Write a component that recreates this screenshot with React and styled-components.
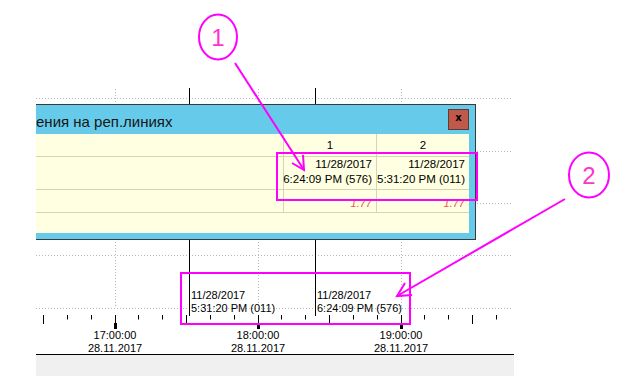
import React from 'react';
import styled, { createGlobalStyle } from 'styled-components';

const GlobalStyle = createGlobalStyle`
    html, body {
        margin: 0;
        padding: 0;
        background: #ffffff;
    }
    body {
        font-family: 'Liberation Sans', Arial, sans-serif;
    }
`;

const CHART_LEFT = 36;
const CHART_WIDTH = 478;
const PX_PER_MIN = 143 / 60;
const HOUR17_X = 114.5 - CHART_LEFT;

// minutes since 17:00 -> x inside the chart
const timeX = (min) => HOUR17_X + min * PX_PER_MIN;

const Page = styled.div`
    position: relative;
    width: 633px;
    height: 385px;
    overflow: hidden;
    box-sizing: border-box;
    padding: 88px 0 0 ${CHART_LEFT}px;
`;

const Chart = styled.div`
    display: flex;
    flex-direction: column;
    width: ${CHART_WIDTH}px;
`;

const Plot = styled.div`
    position: relative;
    height: 241px;

    svg {
        display: block;
    }
`;

const MarkerLabel = styled.div`
    position: absolute;
    top: 201px;
    font-size: 11px;
    line-height: 13px;
    color: #000;
    white-space: nowrap;
`;

const AxisLabels = styled.div`
    position: relative;
    height: 25px;
`;

const AxisLabel = styled.div`
    position: absolute;
    top: 0;
    transform: translateX(-50%);
    font-size: 11px;
    line-height: 13px;
    color: #000;
    text-align: center;
    white-space: nowrap;
`;

const StatusBar = styled.div`
    height: 21px;
    border-top: 1px solid #000;
    background: #f0f0f0;
`;

const Dialog = styled.div`
    position: absolute;
    left: ${CHART_LEFT}px;
    top: 104px;
    width: 440px;
    height: 136px;
    box-sizing: border-box;
    display: flex;
    flex-direction: column;
    background: #66cbea;
    border: 1px solid #3a3a3a;
    border-left: none;
    padding: 0 6px 6px 0;
`;

const TitleBar = styled.div`
    display: flex;
    align-items: center;
    justify-content: space-between;
    height: 29px;
    flex-shrink: 0;
`;

const Title = styled.div`
    font-size: 15px;
    color: #161616;
    padding-top: 3px;
    white-space: nowrap;
`;

const CloseButton = styled.div`
    width: 19px;
    height: 17px;
    margin-top: -1px;
    padding-bottom: 2px;
    display: flex;
    align-items: center;
    justify-content: center;
    background: #c1594b;
    border: 1px solid #5e3a32;
    font-family: 'DejaVu Sans', sans-serif;
    font-weight: bold;
    font-size: 10px;
    line-height: 1;
    color: #000;
`;

const Content = styled.div`
    flex: 1;
    background: #ffffe1;
`;

const Table = styled.div`
    display: grid;
    grid-template-columns: 247px 93px 93px;
    grid-template-rows: 23px 33px 23px;
`;

const Cell = styled.div`
    box-sizing: border-box;
    border-bottom: 1px solid #d6d3b6;
    border-left: ${(p) => (p.$first ? 'none' : '1px solid #d6d3b6')};
    display: flex;
    flex-direction: column;
    justify-content: ${(p) => p.$justify || 'center'};
    align-items: ${(p) => p.$align || 'flex-end'};
    padding-right: ${(p) => (p.$align === 'center' ? '0' : '4px')};
    font-size: 11.5px;
    line-height: 15px;
    color: #000;
    white-space: nowrap;
`;

const Value = styled.span`
    font-size: 11px;
    font-style: italic;
    color: #ec5656;
    padding-top: 4px;
`;

const Annotations = styled.svg`
    position: absolute;
    left: 0;
    top: 0;
    pointer-events: none;
`;

const markers = [
    { min: 31 + 20 / 60, date: '11/28/2017', time: '5:31:20 PM (011)' },
    { min: 84 + 9 / 60, date: '11/28/2017', time: '6:24:09 PM (576)' },
];

const hours = [
    { min: 0, time: '17:00:00' },
    { min: 60, time: '18:00:00' },
    { min: 120, time: '19:00:00' },
];

const gridRows = [10, 63, 115, 167, 220];

const ChartGrid = () => {
    const ticks = [];
    for (let m = -30; m <= 160; m += 10) ticks.push(m);

    return (
        <svg width={CHART_WIDTH} height={241}>
            {gridRows.map((y) => (
                <line key={y} x1={0} x2={476} y1={y + 0.5} y2={y + 0.5}
                    stroke="#b8b8b8" strokeDasharray="1 2" />
            ))}
            {hours.map((h) => {
                const x = Math.round(timeX(h.min)) + 0.5;
                return (
                    <line key={h.time} x1={x} x2={x} y1={1} y2={220}
                        stroke="#b8b8b8" strokeDasharray="1 2" />
                );
            })}
            {markers.map((m) => {
                const x = Math.round(timeX(m.min)) + 0.5;
                return <line key={m.time} x1={x} x2={x} y1={0} y2={228} stroke="#000" />;
            })}
            {ticks.map((m) => {
                const x = Math.round(timeX(m)) + 0.5;
                const isHour = m % 60 === 0;
                const isHalf = m % 30 === 0;
                return (
                    <g key={m}>
                        <line x1={x} x2={x} y1={227} y2={isHalf ? 236 : 231.5} stroke="#000" />
                        {isHour && <rect x={x - 1.5} y={235} width={3} height={6} fill="#000" />}
                    </g>
                );
            })}
        </svg>
    );
};

const App = () => {
    return (
        <>
            <GlobalStyle />
            <Page>
                <Chart>
                    <Plot>
                        <ChartGrid />
                        {markers.map((m) => (
                            <MarkerLabel key={m.time} style={{ left: Math.round(timeX(m.min)) + 2 }}>
                                <div>{m.date}</div>
                                <div>{m.time}</div>
                            </MarkerLabel>
                        ))}
                    </Plot>
                    <AxisLabels>
                        {hours.map((h) => (
                            <AxisLabel key={h.time} style={{ left: timeX(h.min) + 0.5 }}>
                                <div>{h.time}</div>
                                <div>28.11.2017</div>
                            </AxisLabel>
                        ))}
                    </AxisLabels>
                    <StatusBar />
                </Chart>

                <Dialog>
                    <TitleBar>
                        <Title>ения на реп.линиях</Title>
                        <CloseButton>x</CloseButton>
                    </TitleBar>
                    <Content>
                        <Table>
                            <Cell $first />
                            <Cell $align="center">1</Cell>
                            <Cell $align="center">2</Cell>

                            <Cell $first />
                            <Cell $justify="flex-start">
                                <div>11/28/2017</div>
                                <div>6:24:09 PM (576)</div>
                            </Cell>
                            <Cell $justify="flex-start">
                                <div>11/28/2017</div>
                                <div>5:31:20 PM (011)</div>
                            </Cell>

                            <Cell $first />
                            <Cell><Value>1.77</Value></Cell>
                            <Cell><Value>1.77</Value></Cell>
                        </Table>
                    </Content>
                </Dialog>

                <Annotations width={633} height={385}>
                    <g fill="none" stroke="#ff00ff" strokeWidth={2}>
                        <ellipse cx={218} cy={37} rx={19} ry={22.5} />
                        <ellipse cx={589} cy={175} rx={20} ry={22.5} />
                        <rect x={277} y={153} width={200} height={47} />
                        <rect x={181} y={273} width={229} height={51} />
                        <line x1={235} y1={63} x2={304} y2={170} />
                        <polyline points="292,163 304,170 303,155" />
                        <line x1={565} y1={199} x2={397} y2={296} />
                        <polyline points="405,283 397,296 412,295" />
                    </g>
                    <g fill="#ff33cc" fontFamily="'Liberation Sans', Arial, sans-serif" fontSize="24" textAnchor="middle">
                        <text x={218} y={46}>1</text>
                        <text x={589} y={184}>2</text>
                    </g>
                </Annotations>
            </Page>
        </>
    );
};

export default App;
